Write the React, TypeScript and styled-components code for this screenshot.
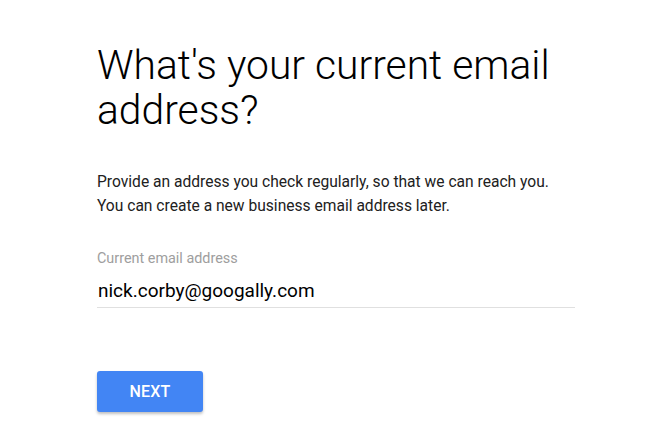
import React from "react";
import styled, { createGlobalStyle } from "styled-components";

const Global = createGlobalStyle`
  html, body { margin: 0; padding: 0; background: #ffffff; }
  body { font-family: Roboto, "Noto Sans", Arial, sans-serif; -webkit-font-smoothing: antialiased; }
`;

const Page = styled.div`
  width: 645px;
  height: 446px;
  box-sizing: border-box;
  padding: 43px 0 0 97px;
  overflow: hidden;
`;

const Form = styled.div`
  width: 478px;
  display: flex;
  flex-direction: column;
`;

const Heading = styled.h1`
  margin: 0;
  font-family: Roboto, sans-serif;
  font-weight: 300;
  font-size: 40.8px;
  line-height: 45px;
  color: #000;
  letter-spacing: 0;
`;

const Intro = styled.p`
  margin: 37px 0 0 0;
  font-family: Roboto, sans-serif;
  font-size: 15.6px;
  line-height: 24px;
  color: #212121;
`;

const Field = styled.label`
  margin-top: 32px;
  display: flex;
  flex-direction: column;
`;

const FieldLabel = styled.span`
  font-family: Roboto, sans-serif;
  font-size: 14.4px;
  line-height: 17px;
  color: #9e9e9e;
`;

const Input = styled.input`
  margin-top: 12px;
  border: none;
  border-bottom: 1px solid #e0e0e0;
  padding: 0 0 5px 1px;
  font-family: Roboto, sans-serif;
  font-size: 19px;
  line-height: 23px;
  color: #000;
  outline: none;
  background: transparent;
`;

const Button = styled.button`
  margin-top: 63px;
  width: 106px;
  height: 41px;
  border: none;
  border-radius: 3px;
  background: #4285f4;
  color: #fff;
  font-family: Roboto, sans-serif;
  font-weight: 500;
  font-size: 16px;
  letter-spacing: 0.2px;
  box-shadow: 0 2px 3px rgba(0, 0, 0, 0.25);
  cursor: pointer;
`;

export default function App() {
  return (
    <>
      <Global />
      <Page>
        <Form>
          <Heading>What's your current email address?</Heading>
          <Intro>
            Provide an address you check regularly, so that we can reach you.
            <br />
            You can create a new business email address later.
          </Intro>
          <Field>
            <FieldLabel>Current email address</FieldLabel>
            <Input defaultValue="nick.corby@googally.com" />
          </Field>
          <Button>NEXT</Button>
        </Form>
      </Page>
    </>
  );
}
